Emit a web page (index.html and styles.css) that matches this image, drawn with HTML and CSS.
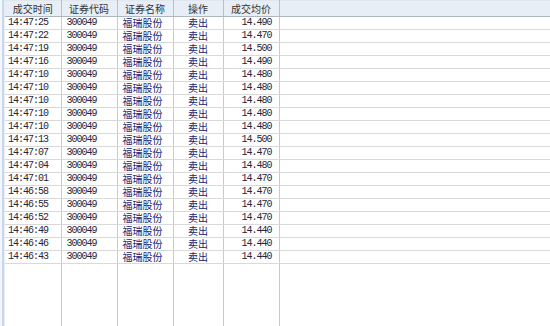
FILE: index.html
```html
<!DOCTYPE html>
<html lang="zh">
<head>
<meta charset="utf-8">
<link rel="stylesheet" href="styles.css">
</head>
<body>
<div class="wrap">
  <div class="strip"></div>
  <table class="grid">
    <colgroup>
      <col class="c1"><col class="c2"><col class="c3"><col class="c4"><col class="c5"><col class="c6">
    </colgroup>
    <thead>
      <tr class="head">
        <th>成交时间</th><th>证券代码</th><th>证券名称</th><th>操作</th><th>成交均价</th><th class="fill"></th>
      </tr>
    </thead>
    <tbody>
      <tr><td class="num t">14:47:25</td><td class="num">300049</td><td class="cn">福瑞股份</td><td class="op">卖出</td><td class="num r">14.490</td><td class="fill"></td></tr>
      <tr><td class="num t">14:47:22</td><td class="num">300049</td><td class="cn">福瑞股份</td><td class="op">卖出</td><td class="num r">14.470</td><td class="fill"></td></tr>
      <tr><td class="num t">14:47:19</td><td class="num">300049</td><td class="cn">福瑞股份</td><td class="op">卖出</td><td class="num r">14.500</td><td class="fill"></td></tr>
      <tr><td class="num t">14:47:16</td><td class="num">300049</td><td class="cn">福瑞股份</td><td class="op">卖出</td><td class="num r">14.490</td><td class="fill"></td></tr>
      <tr><td class="num t">14:47:10</td><td class="num">300049</td><td class="cn">福瑞股份</td><td class="op">卖出</td><td class="num r">14.480</td><td class="fill"></td></tr>
      <tr><td class="num t">14:47:10</td><td class="num">300049</td><td class="cn">福瑞股份</td><td class="op">卖出</td><td class="num r">14.480</td><td class="fill"></td></tr>
      <tr><td class="num t">14:47:10</td><td class="num">300049</td><td class="cn">福瑞股份</td><td class="op">卖出</td><td class="num r">14.480</td><td class="fill"></td></tr>
      <tr><td class="num t">14:47:10</td><td class="num">300049</td><td class="cn">福瑞股份</td><td class="op">卖出</td><td class="num r">14.480</td><td class="fill"></td></tr>
      <tr><td class="num t">14:47:10</td><td class="num">300049</td><td class="cn">福瑞股份</td><td class="op">卖出</td><td class="num r">14.480</td><td class="fill"></td></tr>
      <tr><td class="num t">14:47:13</td><td class="num">300049</td><td class="cn">福瑞股份</td><td class="op">卖出</td><td class="num r">14.500</td><td class="fill"></td></tr>
      <tr><td class="num t">14:47:07</td><td class="num">300049</td><td class="cn">福瑞股份</td><td class="op">卖出</td><td class="num r">14.470</td><td class="fill"></td></tr>
      <tr><td class="num t">14:47:04</td><td class="num">300049</td><td class="cn">福瑞股份</td><td class="op">卖出</td><td class="num r">14.480</td><td class="fill"></td></tr>
      <tr><td class="num t">14:47:01</td><td class="num">300049</td><td class="cn">福瑞股份</td><td class="op">卖出</td><td class="num r">14.470</td><td class="fill"></td></tr>
      <tr><td class="num t">14:46:58</td><td class="num">300049</td><td class="cn">福瑞股份</td><td class="op">卖出</td><td class="num r">14.470</td><td class="fill"></td></tr>
      <tr><td class="num t">14:46:55</td><td class="num">300049</td><td class="cn">福瑞股份</td><td class="op">卖出</td><td class="num r">14.470</td><td class="fill"></td></tr>
      <tr><td class="num t">14:46:52</td><td class="num">300049</td><td class="cn">福瑞股份</td><td class="op">卖出</td><td class="num r">14.470</td><td class="fill"></td></tr>
      <tr><td class="num t">14:46:49</td><td class="num">300049</td><td class="cn">福瑞股份</td><td class="op">卖出</td><td class="num r">14.440</td><td class="fill"></td></tr>
      <tr><td class="num t">14:46:46</td><td class="num">300049</td><td class="cn">福瑞股份</td><td class="op">卖出</td><td class="num r">14.440</td><td class="fill"></td></tr>
      <tr><td class="num t">14:46:43</td><td class="num">300049</td><td class="cn">福瑞股份</td><td class="op">卖出</td><td class="num r">14.440</td><td class="fill"></td></tr>
      <tr class="rest"><td></td><td></td><td></td><td></td><td></td><td class="fill"></td></tr>
    </tbody>
  </table>
</div>
</body>
</html>
```

FILE: styles.css
```css
html, body {
  margin: 0;
  padding: 0;
  background: #ffffff;
}
.wrap {
  display: flex;
  width: 550px;
  height: 326px;
  overflow: hidden;
}
.strip {
  flex: 0 0 5px;
  box-sizing: border-box;
  border-left: 2px solid #f4f7fb;
  background: #c9d8ec;
  border-right: 1px solid #e6edf6;
}
.grid {
  flex: 1 1 auto;
  border-collapse: collapse;
  table-layout: fixed;
  width: 545px;
  height: 326px;
  font-family: "Noto Sans CJK SC", "Liberation Sans", sans-serif;
  font-size: 10px;
}
.c1 { width: 56px; }
.c2 { width: 56px; }
.c3 { width: 56px; }
.c4 { width: 50px; }
.c5 { width: 56px; }
.c6 { width: auto; }
.head th {
  height: 16px;
  padding: 0;
  box-sizing: border-box;
  background: #e8eef5;
  border-top: 1px solid #dfe6ee;
  border-bottom: 1px solid #aeb6bf;
  border-right: 1px solid #b9bfc6;
  font-weight: normal;
  color: #333333;
  text-align: center;
  line-height: 14px;
  white-space: nowrap;
  overflow: hidden;
}
.head th.fill {
  border-right: none;
}
tbody tr {
  height: 13px;
}
tbody td {
  padding: 0 0 0 5px;
  height: 13px;
  box-sizing: border-box;
  border-bottom: 1px solid #d9d9d9;
  border-right: 1px solid #c9c9c9;
  line-height: 12px;
  white-space: nowrap;
  overflow: hidden;
  vertical-align: middle;
}
tbody td.fill {
  border-right: none;
}
.num {
  font-family: "Liberation Mono", "DejaVu Sans Mono", monospace;
  font-size: 10px;
  letter-spacing: -1px;
  color: #25253a;
}
.t {
  padding-left: 3px;
}
.r {
  text-align: right;
  padding: 0 7px 0 0;
}
.cn {
  color: #1c2270;
}
.op {
  color: #1c2270;
  text-align: center;
  padding: 0;
}
tr.rest {
  height: auto;
}
tr.rest td {
  height: auto;
  border-bottom: none;
}
```
